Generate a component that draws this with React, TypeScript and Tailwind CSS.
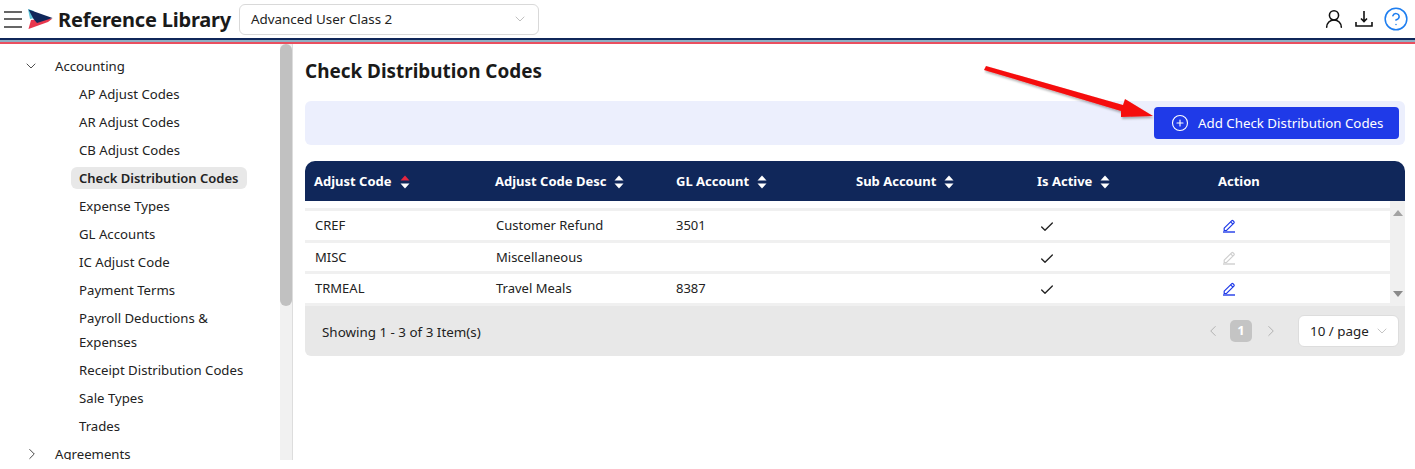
import React from "react";
import { ChevronDown, ChevronRight, ChevronLeft, CirclePlus, Check, CircleHelp, UserRound } from "lucide-react";

const menuItems = [
  "AP Adjust Codes",
  "AR Adjust Codes",
  "CB Adjust Codes",
  "Check Distribution Codes",
  "Expense Types",
  "GL Accounts",
  "IC Adjust Code",
  "Payment Terms",
  "Payroll Deductions & Expenses",
  "Receipt Distribution Codes",
  "Sale Types",
  "Trades",
];

const columns = ["Adjust Code", "Adjust Code Desc", "GL Account", "Sub Account", "Is Active", "Action"];

const rows = [
  { code: "CREF", desc: "Customer Refund", gl: "3501", height: "h-[29px]", text: "", editable: true },
  { code: "MISC", desc: "Miscellaneous", gl: "", height: "h-[28px]", text: "pt-[1px]", editable: false },
  { code: "TRMEAL", desc: "Travel Meals", gl: "8387", height: "h-[29px]", text: "", editable: true },
];

const SortIcon = ({ active }: { active?: boolean }) => (
  <svg width="10" height="14" viewBox="0 0 10 14" className="ml-[8px]">
    <path d="M5 0.5 9.5 5.5H0.5Z" fill={active ? "#e5263f" : "#ffffff"} />
    <path d="M5 13.5 9.5 8.5H0.5Z" fill="#ffffff" />
  </svg>
);

const EditIcon = ({ color }: { color: string }) => (
  <svg width="14" height="14" viewBox="0 0 14 14" fill="none" stroke={color} strokeWidth="1.2">
    <path d="M2.2 9.2 9.6 1.8a1 1 0 0 1 1.4 0l.9.9a1 1 0 0 1 0 1.4L4.5 11.5H2.2Z" />
    <path d="M8.6 2.8 11 5.2" />
    <path d="M1 13h12" strokeWidth="1.4" />
  </svg>
);

const Logo = () => (
  <svg width="25" height="20" viewBox="0 0 25 20">
    <path d="M0 0 6 2 7 9 2 10Z" fill="#5cc3d8" />
    <path d="M0.5 20 3 11 24.5 9.5 20 13Z" fill="#e8374e" />
    <path d="M0.5 0.5 24.5 9 9 14 5.5 10Z" fill="#10275a" />
  </svg>
);

const Arrow = () => (
  <svg width="172" height="58" viewBox="0 0 172 58" className="absolute left-[984px] top-[64px]">
    <defs>
      <filter id="arrowShadow" x="-10%" y="-20%" width="120%" height="150%">
        <feDropShadow dx="1" dy="2" stdDeviation="1.2" floodColor="#000000" floodOpacity="0.3" />
      </filter>
    </defs>
    <path d="M2 2 139 41 141 35 169 52 137 53 137 47 0 6Z" fill="#f50a0a" filter="url(#arrowShadow)" />
  </svg>
);

export default function App() {
  return (
    <div className="relative h-[469px] w-[1415px] overflow-hidden bg-white font-['Noto_Sans',sans-serif] text-[13px] text-[#222222]">
      {/* Top bar */}
      <header className="flex h-[38px] items-center pl-[4px] pr-[6px]">
        <div className="flex h-[17px] w-[18px] flex-col justify-between">
          <span className="h-[2px] bg-[#666666]"></span>
          <span className="h-[2px] bg-[#666666]"></span>
          <span className="h-[2px] bg-[#666666]"></span>
        </div>
        <div className="ml-[6px]">
          <Logo />
        </div>
        <h1 className="ml-[5px] pt-[1px] text-[20px] font-bold tracking-[-0.01em] text-[#1a1a1a]">Reference Library</h1>
        <div className="ml-[8px] flex h-[31px] w-[300px] items-center justify-between rounded-[6px] border border-[#d9d9d9] pl-[11px] pr-[10px]">
          <span className="text-[13.4px]">Advanced User Class 2</span>
          <ChevronDown size={16} strokeWidth={1} className="text-[#a0a0a0]" />
        </div>
        <div className="ml-auto flex items-center gap-[9px]">
          <UserRound size={22} strokeWidth={1.7} className="text-[#111111]" />
          <svg width="20" height="20" viewBox="0 0 20 20" fill="none" stroke="#111111" strokeWidth="1.6">
            <path d="M10 2v10M7 9.5 10 12.5 13 9.5" />
            <path d="M2 13v4h16v-4" />
          </svg>
          <CircleHelp size={26} strokeWidth={1.4} className="text-[#1e7ef0]" />
        </div>
      </header>
      <div className="h-[2px] bg-[#10275a]"></div>
      <div className="h-[2px] bg-[#8fb0c4]"></div>
      <div className="h-[2px] bg-[#ea4f5f]"></div>

      <div className="flex">
        {/* Sidebar */}
        <aside className="flex h-[416px] w-[293px] overflow-hidden">
          <nav className="w-[280px] pt-[8px] text-[13.2px]">
            <div className="flex h-[28px] items-center pl-[23px]">
              <ChevronDown size={16} strokeWidth={1.2} />
              <span className="ml-[16px] pt-[1px]">Accounting</span>
            </div>
            {menuItems.map((item) =>
              item === "Check Distribution Codes" ? (
                <div key={item} className="flex h-[28px] items-center pl-[71px]">
                  <span className="rounded-[6px] bg-[#e8e8e8] px-[8px] pb-[0px] pt-[2px] text-[13px] font-semibold">{item}</span>
                </div>
              ) : (
                <div key={item} className="py-[2px] pl-[79px] pr-[30px] leading-[24px]">
                  {item}
                </div>
              ),
            )}
            <div className="flex h-[28px] items-center pl-[23px]">
              <ChevronRight size={18} strokeWidth={1.1} />
              <span className="ml-[14px] pt-[1px]">Agreements</span>
            </div>
          </nav>
          <div className="w-[13px] border-r border-[#dddddd] bg-[#f1f1f1]">
            <div className="h-[262px] rounded-[6px] bg-[#c1c1c1]"></div>
          </div>
        </aside>

        {/* Main content */}
        <main className="w-[1112px] pl-[12px] pt-[14px]">
          <h2 className="text-[18.9px] font-bold leading-[26px] text-[#1a1a1a]">Check Distribution Codes</h2>
          <div className="mt-[17px] flex h-[44px] items-center justify-end rounded-[6px] bg-[#eceffd] pr-[6px]">
            <button className="flex h-[32px] w-[245px] items-center rounded-[4px] bg-[#1f3ae8] pl-[17px] text-white">
              <CirclePlus size={18} strokeWidth={1.5} />
              <span className="ml-[9px] pt-[1px] text-[13.3px]">Add Check Distribution Codes</span>
            </button>
          </div>

          <div className="mt-[16px]">
            <div className="grid h-[40px] grid-cols-[181px_181px_180px_181px_181px_187px] items-center rounded-t-[10px] bg-[#10275a] pl-[9px] pt-[1px] font-bold text-white">
              {columns.map((col, i) => (
                <div key={col} className="flex items-center">
                  {col}
                  {col !== "Action" && <SortIcon active={i === 0} />}
                </div>
              ))}
            </div>
            <div className="flex h-[105px] flex-col bg-[#f0f0f0]">
              <div className="h-[7px] w-[1085px] bg-white"></div>
              <div className="flex flex-1">
                <div className="flex w-[1085px] flex-col gap-[3px] pt-[3px]">
                  {rows.map((row) => (
                    <div
                      key={row.code}
                      className={`grid ${row.height} ${row.text} grid-cols-[181px_180px_181px_181px_181px_171px] items-center bg-white pl-[10px]`}
                    >
                      <span>{row.code}</span>
                      <span>{row.desc}</span>
                      <span>{row.gl}</span>
                      <span></span>
                      <span className="pl-[1px] pt-[2px]">
                        <Check size={16} strokeWidth={2} />
                      </span>
                      <span className="pl-[3px]">
                        <EditIcon color={row.editable ? "#1f3ae8" : "#cfcfcf"} />
                      </span>
                    </div>
                  ))}
                </div>
                <div className="flex w-[15px] flex-col items-center justify-between pb-[9px] pt-[2px]">
                  <span className="h-0 w-0 border-x-[5px] border-b-[6px] border-x-transparent border-b-[#a3a3a3]"></span>
                  <span className="h-0 w-0 border-x-[5px] border-t-[6px] border-x-transparent border-t-[#8a8a8a]"></span>
                </div>
              </div>
            </div>
            <div className="flex h-[50px] items-center rounded-b-[6px] bg-[#e8e8e8] pl-[17px] pr-[6px]">
              <span className="pt-[2px] text-[13.4px]">Showing 1 - 3 of 3 Item(s)</span>
              <div className="ml-auto flex items-center">
                <ChevronLeft size={18} strokeWidth={1.3} className="text-[#b0b0b0]" />
                <span className="ml-[8px] flex h-[22px] w-[22px] items-center justify-center rounded-[5px] bg-[#c4c4c4] font-bold text-white">
                  1
                </span>
                <ChevronRight size={18} strokeWidth={1.3} className="ml-[10px] text-[#b0b0b0]" />
                <div className="ml-[18px] flex h-[32px] w-[101px] items-center justify-between rounded-[6px] border border-[#dddddd] bg-white pl-[11px] pr-[8px]">
                  <span className="pt-[1px] text-[13.4px]">10 / page</span>
                  <ChevronDown size={16} strokeWidth={1} className="text-[#a8a8a8]" />
                </div>
              </div>
            </div>
          </div>
        </main>
      </div>

      {/* Red annotation arrow drawn over the page */}
      <Arrow />
    </div>
  );
}
